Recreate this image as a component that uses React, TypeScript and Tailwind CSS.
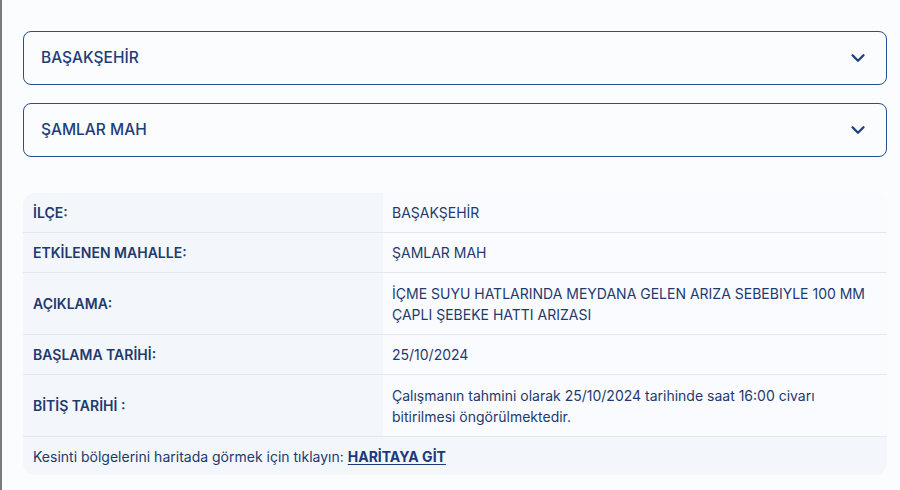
import { ChevronDown } from "lucide-react";

const rows: { label: string; value: string }[] = [
  { label: "İLÇE:", value: "BAŞAKŞEHİR" },
  { label: "ETKİLENEN MAHALLE:", value: "ŞAMLAR MAH" },
  {
    label: "AÇIKLAMA:",
    value: "İÇME SUYU HATLARINDA MEYDANA GELEN ARIZA SEBEBIYLE 100 MM ÇAPLI ŞEBEKE HATTI ARIZASI",
  },
  { label: "BAŞLAMA TARİHİ:", value: "25/10/2024" },
  {
    label: "BİTİŞ TARİHİ :",
    value: "Çalışmanın tahmini olarak 25/10/2024 tarihinde saat 16:00 civarı bitirilmesi öngörülmektedir.",
  },
];

function Select({ value }: { value: string }) {
  return (
    <div className="flex h-[54px] items-center justify-between rounded-lg border border-[#25508f] bg-[#fbfcfe] pl-[17px] pr-[17px]">
      <span className="text-[15.5px] font-medium text-[#1f3d78]">{value}</span>
      <ChevronDown className="h-[22px] w-[22px] text-[#1d3f7a]" strokeWidth={2.5} />
    </div>
  );
}

export default function App() {
  return (
    <div
      className="h-[490px] w-[900px] border-l-2 border-[#7a7a7a] bg-[#fafcfe] pl-[21px] pr-[13px] pt-[31px]"
      style={{ fontFamily: "Inter, 'Noto Sans', sans-serif" }}
    >
      <div className="flex flex-col gap-[18px]">
        <Select value="BAŞAKŞEHİR" />
        <Select value="ŞAMLAR MAH" />
      </div>

      <div className="mt-[36px] overflow-hidden rounded-xl bg-[#f3f6fb] text-[14px] text-[#1e3a6e]">
        {rows.map((r, i) => (
          <div
            key={r.label}
            className={`grid grid-cols-[360px_1fr] border-b border-[#e3e8ef] ${i === 2 || i === 4 ? "min-h-[62px]" : "min-h-[40px]"}`}
          >
            <div className="flex items-center px-[10px] font-semibold">{r.label}</div>
            <div className="flex items-center bg-[#f9fbfe] py-[8px] pl-[9px] pr-[16px] font-normal leading-[21px]">
              {r.value}
            </div>
          </div>
        ))}
        <div className="flex h-[38px] items-center px-[10px] font-normal">
          Kesinti bölgelerini haritada görmek için tıklayın:&nbsp;
          <a href="#" className="font-bold text-[#1a3a78] underline underline-offset-2">
            HARİTAYA GİT
          </a>
        </div>
      </div>
    </div>
  );
}
